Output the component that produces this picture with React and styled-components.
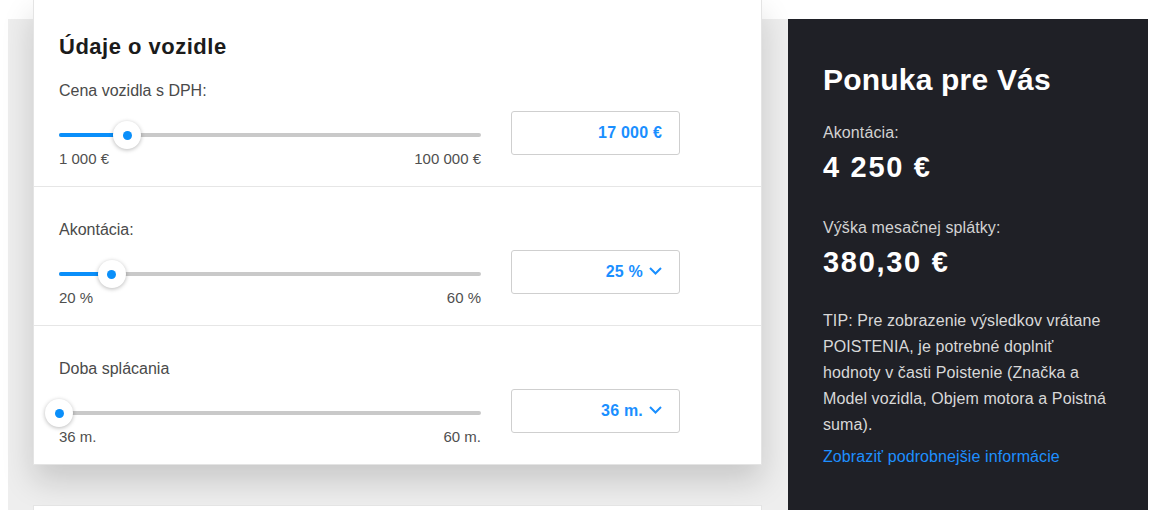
import React from "react";
import styled, { createGlobalStyle } from "styled-components";

const GlobalStyle = createGlobalStyle`
  html, body { margin: 0; padding: 0; background: #ffffff; }
  body { font-family: "Liberation Sans", Arial, sans-serif; }
  * { box-sizing: border-box; }
`;

const Page = styled.div`
  display: flex;
  align-items: stretch;
  height: 510px;
  overflow: hidden;
  padding: 19px 4px 0 8px;
`;

const LeftColumn = styled.div`
  width: 780px;
  background: #eeeeee;
  padding: 0 26px 0 25px;
`;

const Card = styled.div`
  background: #ffffff;
  border: 1px solid #e4e4e4;
  margin-top: ${(p) => (p.$lifted ? "-20px" : "40px")};
  box-shadow: ${(p) => (p.$lifted ? "0 16px 30px rgba(0,0,0,0.16)" : "none")};
  min-height: ${(p) => (p.$lifted ? "auto" : "60px")};
`;

const Section = styled.div`
  padding: ${(p) => (p.$first ? "34px" : "33px")} 25px 19px 25px;
  border-bottom: ${(p) => (p.$last ? "none" : "1px solid #e6e6e6")};
`;

const CardTitle = styled.h2`
  margin: 0 0 21px 0;
  font-size: 22px;
  line-height: 26px;
  font-weight: 700;
  letter-spacing: 0.5px;
  color: #1b1b1b;
`;

const FieldLabel = styled.div`
  font-size: 16px;
  line-height: 20px;
  color: #4a4a4a;
  margin-bottom: 10px;
`;

const FieldRow = styled.div`
  display: grid;
  grid-template-columns: 422px 169px;
  column-gap: 30px;
  align-items: start;
`;

const SliderCol = styled.div`
  padding-top: 14px;
`;

const TrackWrap = styled.div`
  position: relative;
  height: 20px;
  display: flex;
  align-items: center;
`;

const Track = styled.div`
  position: relative;
  width: 100%;
  height: 4px;
  border-radius: 2px;
  background: #c9c9c9;
`;

const Fill = styled.div`
  position: absolute;
  left: 0;
  top: 0;
  height: 4px;
  border-radius: 2px;
  background: #0a8ffa;
`;

const Thumb = styled.div`
  position: absolute;
  top: 50%;
  width: 28px;
  height: 28px;
  margin-left: -14px;
  margin-top: -14px;
  border-radius: 50%;
  background: #ffffff;
  box-shadow: 0 1px 4px rgba(0, 0, 0, 0.28);
  display: flex;
  align-items: center;
  justify-content: center;

  &::after {
    content: "";
    width: 9px;
    height: 9px;
    border-radius: 50%;
    background: #0a8ffa;
  }
`;

const Scale = styled.div`
  display: flex;
  justify-content: space-between;
  margin-top: 6px;
  font-size: 15px;
  line-height: 16px;
  color: #4f4f4f;
`;

const ValueBox = styled.div`
  height: 44px;
  border: 1px solid #cfcfcf;
  border-radius: 3px;
  display: flex;
  align-items: center;
  justify-content: flex-end;
  padding-right: 17px;
  font-size: 16px;
  font-weight: 700;
  color: #1a8fff;
  letter-spacing: 0.2px;
`;

const Chevron = styled.svg`
  margin-left: 6px;
  width: 13px;
  height: 8px;
  margin-bottom: 2px;
`;

const Offer = styled.aside`
  width: 360px;
  background: #1f2026;
  padding: 43px 35px 0 35px;
  color: #ffffff;
`;

const OfferTitle = styled.h2`
  margin: 0;
  font-size: 30px;
  line-height: 36px;
  font-weight: 700;
  letter-spacing: 0.2px;
`;

const OfferLabel = styled.div`
  font-size: 16px;
  line-height: 20px;
  letter-spacing: 0.1px;
  color: #d2d2d2;
  margin-top: ${(p) => p.$mt}px;
`;

const OfferValue = styled.div`
  font-size: 29px;
  line-height: 34px;
  font-weight: 700;
  letter-spacing: 1.7px;
  margin-top: ${(p) => p.$mt}px;
`;

const Tip = styled.p`
  margin: 29px 0 0 0;
  font-size: 16px;
  line-height: 26px;
  letter-spacing: 0.1px;
  color: #d8d8d8;
`;

const MoreLink = styled.a`
  display: block;
  margin-top: 9px;
  font-size: 16px;
  line-height: 20px;
  letter-spacing: 0.1px;
  color: #1e8fff;
  text-decoration: none;
`;

function Slider({ min, max, value }) {
  const pct = ((value - min) / (max - min)) * 100;
  return (
    <TrackWrap>
      <Track>
        <Fill style={{ width: `${pct}%` }} />
        <Thumb style={{ left: `${pct}%` }} />
      </Track>
    </TrackWrap>
  );
}

function Field({ label, min, max, value, minLabel, maxLabel, display, select, title, last }) {
  return (
    <Section $first={!!title} $last={last}>
      {title && <CardTitle>{title}</CardTitle>}
      <FieldLabel>{label}</FieldLabel>
      <FieldRow>
        <SliderCol>
          <Slider min={min} max={max} value={value} />
          <Scale>
            <span>{minLabel}</span>
            <span>{maxLabel}</span>
          </Scale>
        </SliderCol>
        <ValueBox>
          {display}
          {select && (
            <Chevron viewBox="0 0 13 8">
              <path d="M1 1 L6.5 6.5 L12 1" fill="none" stroke="#1a8fff" strokeWidth="2" />
            </Chevron>
          )}
        </ValueBox>
      </FieldRow>
    </Section>
  );
}

export default function App() {
  return (
    <>
      <GlobalStyle />
      <Page>
        <LeftColumn>
          <Card $lifted>
            <Field
              title="Údaje o vozidle"
              label="Cena vozidla s DPH:"
              min={1000}
              max={100000}
              value={17000}
              minLabel="1 000 €"
              maxLabel="100 000 €"
              display="17 000 €"
            />
            <Field
              label="Akontácia:"
              min={20}
              max={60}
              value={25}
              minLabel="20 %"
              maxLabel="60 %"
              display="25 %"
              select
            />
            <Field
              label="Doba splácania"
              min={36}
              max={60}
              value={36}
              minLabel="36 m."
              maxLabel="60 m."
              display="36 m."
              select
              last
            />
          </Card>
          <Card />
        </LeftColumn>
        <Offer>
          <OfferTitle>Ponuka pre Vás</OfferTitle>
          <OfferLabel $mt={25}>Akontácia:</OfferLabel>
          <OfferValue $mt={7}>4 250 €</OfferValue>
          <OfferLabel $mt={34}>Výška mesačnej splátky:</OfferLabel>
          <OfferValue $mt={7}>380,30 €</OfferValue>
          <Tip>
            TIP: Pre zobrazenie výsledkov vrátane POISTENIA, je potrebné doplniť hodnoty v
            časti Poistenie (Značka a Model vozidla, Objem motora a Poistná suma).
          </Tip>
          <MoreLink href="#">Zobraziť podrobnejšie informácie</MoreLink>
        </Offer>
      </Page>
    </>
  );
}
